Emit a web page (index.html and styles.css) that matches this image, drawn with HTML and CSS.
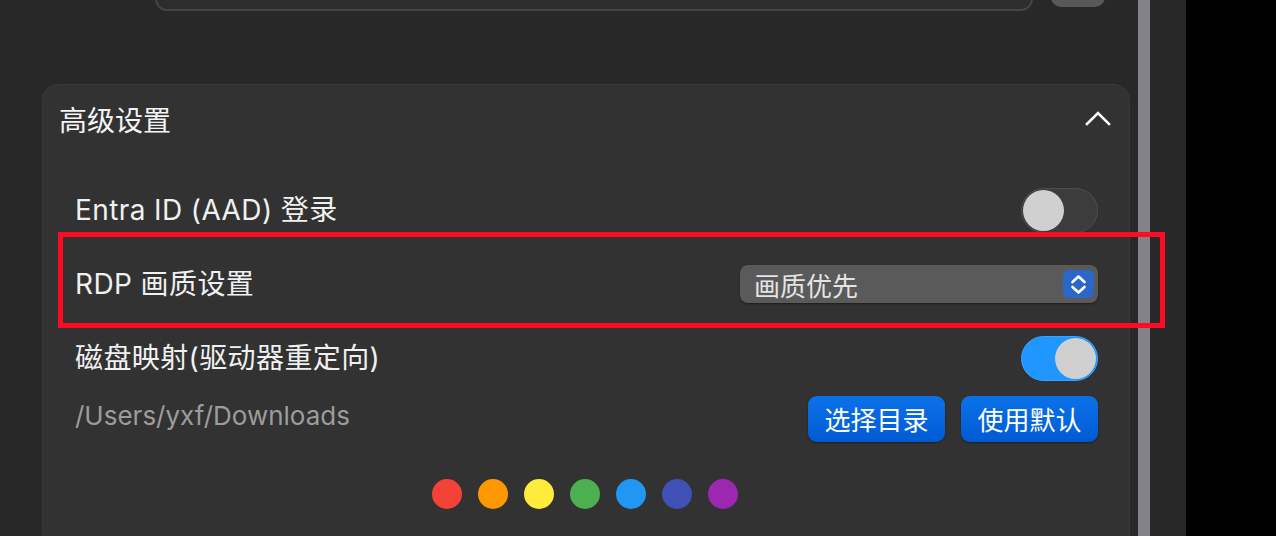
FILE: index.html
```html
<!DOCTYPE html>
<html lang="zh-CN">
<head>
<meta charset="utf-8">
<title>高级设置</title>
<link rel="stylesheet" href="styles.css">
</head>
<body>
<div class="window">
  <div class="pane">
    <div class="content">
      <div class="top-row">
        <div class="top-input"></div>
        <div class="top-btn"></div>
      </div>
      <section class="card">
        <div class="card-head">
          <h2 class="card-title">高级设置</h2>
          <svg class="chevron" width="26" height="16" viewBox="0 0 26 16"><path d="M2 14 L13 3 L24 14" fill="none" stroke="#ffffff" stroke-width="2.6" stroke-linecap="square"/></svg>
        </div>
        <div class="row">
          <span class="label">Entra ID (AAD) 登录</span>
          <div class="switch"><div class="knob"></div></div>
        </div>
        <div class="row">
          <span class="label">RDP 画质设置</span>
          <div class="select">
            <span class="select-text">画质优先</span>
            <span class="stepper">
              <svg width="31" height="28" viewBox="0 0 31 28"><path d="M9.5 12 L15.5 6.5 L21.5 12" fill="none" stroke="#ffffff" stroke-width="2.6" stroke-linecap="round" stroke-linejoin="round"/><path d="M9.5 17 L15.5 22.5 L21.5 17" fill="none" stroke="#ffffff" stroke-width="2.6" stroke-linecap="round" stroke-linejoin="round"/></svg>
            </span>
          </div>
          <div class="annotation"></div>
        </div>
        <div class="row">
          <span class="label">磁盘映射(驱动器重定向)</span>
          <div class="switch on"><div class="knob"></div></div>
        </div>
        <div class="path-row">
          <span class="path">/Users/yxf/Downloads</span>
          <div class="actions">
            <button class="btn">选择目录</button>
            <button class="btn">使用默认</button>
          </div>
        </div>
        <div class="dots">
          <span class="dot red"></span>
          <span class="dot orange"></span>
          <span class="dot yellow"></span>
          <span class="dot green"></span>
          <span class="dot blue"></span>
          <span class="dot indigo"></span>
          <span class="dot purple"></span>
        </div>
      </section>
    </div>
    <div class="scrollbar"></div>
  </div>
  <div class="outside"></div>
</div>
</body>
</html>
```

FILE: styles.css
```css
* { box-sizing: border-box; }

html, body {
  margin: 0;
  padding: 0;
  height: 100%;
  background: #000000;
  overflow: hidden;
}

body {
  font-family: "Inter", "Noto Sans CJK SC", sans-serif;
  color: #ededed;
}

.window {
  display: flex;
  height: 536px;
}

.pane {
  width: 1186px;
  height: 100%;
  background: #282828;
  display: flex;
  padding-right: 36px;
}

.content {
  width: 1138px;
  padding: 0 8px 0 42px;
}

.scrollbar {
  width: 12px;
  height: 100%;
  background: #838288;
}

.outside {
  flex: 1;
  background: #000000;
}

.top-row {
  display: flex;
  align-items: flex-start;
  gap: 18px;
  margin-top: -33px;
  padding-left: 113px;
}

.top-input {
  width: 878px;
  height: 44px;
  border: 2px solid #454545;
  border-radius: 12px;
  background: #2d2d2d;
}

.top-btn {
  width: 54px;
  height: 40px;
  border-radius: 10px;
  background: #585858;
}

.card {
  margin-top: 73px;
  width: 1088px;
  background: #323232;
  border: 1px solid #393939;
  border-radius: 16px;
  padding: 0 19px 40px 16px;
}

.card-head {
  display: flex;
  align-items: center;
  justify-content: space-between;
  padding-top: 19px;
  margin-bottom: 35px;
}

.card-title {
  margin: 0;
  font-size: 28px;
  line-height: 34px;
  font-weight: 400;
  color: #f4f4f4;
}

.chevron {
  display: block;
  margin-bottom: 6px;
  margin-right: -1px;
}

.row {
  position: relative;
  height: 74px;
  margin: 0 12px 0 16px;
  display: flex;
  align-items: center;
  justify-content: space-between;
}

.label {
  font-size: 28px;
  line-height: 34px;
  letter-spacing: 0.4px;
  color: #f0f0f0;
  padding-bottom: 0;
}

.switch {
  width: 77px;
  height: 45px;
  border-radius: 23px;
  background: #3c3c3c;
  border: 1px solid #4e4e4e;
  padding: 1px;
  display: flex;
  align-items: center;
}

.switch.on {
  background: #1f97ff;
  border-color: #3aa2ff;
  justify-content: flex-end;
}

.knob {
  width: 41px;
  height: 41px;
  border-radius: 50%;
  background: #d0d0d0;
}

.select {
  width: 358px;
  height: 38px;
  border-radius: 8px;
  background: #5a5a5a;
  box-shadow: 0 1px 2px rgba(0, 0, 0, 0.45);
  display: flex;
  align-items: center;
  padding: 0 4px 0 14px;
}

.select-text {
  flex: 1;
  font-size: 26px;
  color: #e4e4e4;
}

.stepper {
  width: 31px;
  height: 28px;
  border-radius: 6px;
  background: #2b66c9;
  display: flex;
}

.annotation {
  position: absolute;
  left: -17px;
  top: -15px;
  width: 1107px;
  height: 96px;
  border: 5px solid #ff0a23;
  z-index: 5;
  pointer-events: none;
}

.path-row {
  height: 46px;
  margin: 1px 12px 0 16px;
  display: flex;
  align-items: center;
  justify-content: space-between;
}

.path {
  font-size: 26px;
  color: #9c9c9c;
  padding-bottom: 8px;
}

.actions {
  display: flex;
  gap: 16px;
}

.btn {
  width: 137px;
  height: 46px;
  border: none;
  border-radius: 9px;
  background: linear-gradient(#0c72ea, #005bd3);
  box-shadow: 0 1px 2px rgba(0, 0, 0, 0.4);
  color: #ffffff;
  font-family: inherit;
  font-size: 26px;
  padding: 0 0 2px;
}

.dots {
  margin-top: 37px;
  display: flex;
  justify-content: center;
  gap: 16px;
}

.dot {
  width: 30px;
  height: 30px;
  border-radius: 50%;
}

.red { background: #f44336; }
.orange { background: #ff9800; }
.yellow { background: #ffeb3b; }
.green { background: #4caf50; }
.blue { background: #2196f3; }
.indigo { background: #3f51b5; }
.purple { background: #9c27b0; }
```
